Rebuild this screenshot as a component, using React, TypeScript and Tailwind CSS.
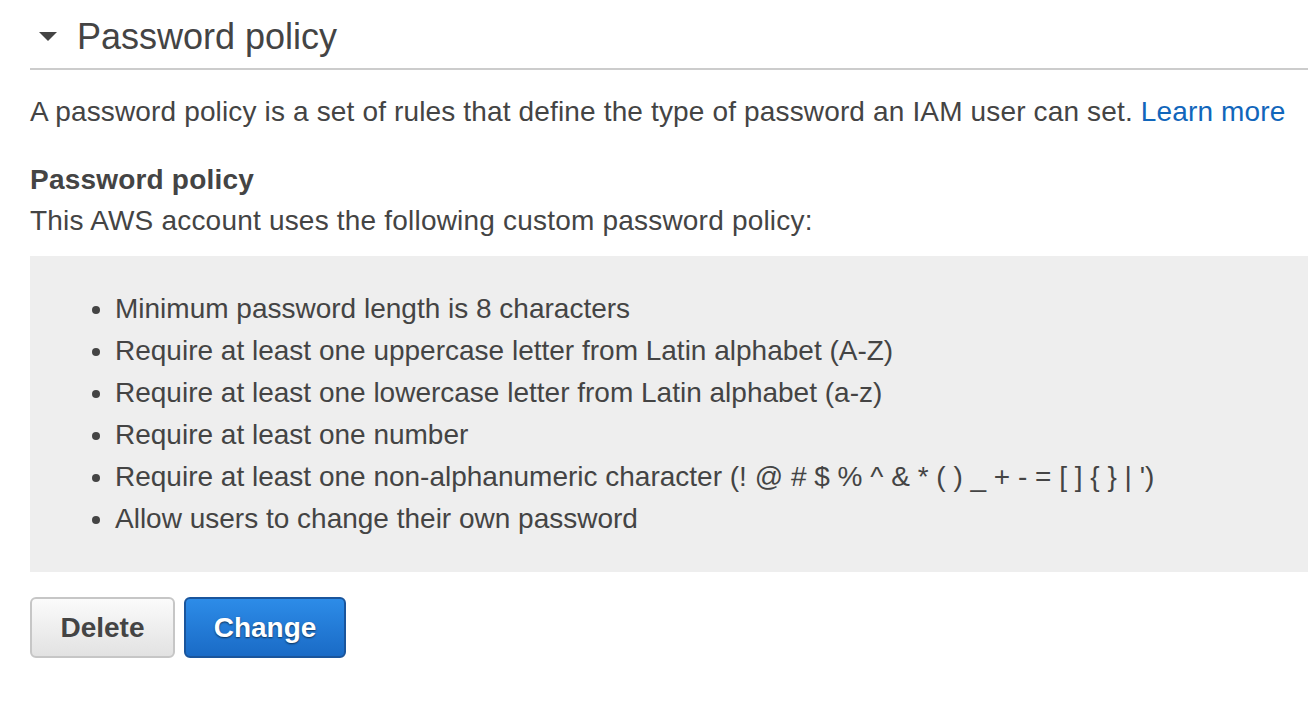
export default function App() {
  const rules = [
    'Minimum password length is 8 characters',
    'Require at least one uppercase letter from Latin alphabet (A-Z)',
    'Require at least one lowercase letter from Latin alphabet (a-z)',
    'Require at least one number',
    "Require at least one non-alphanumeric character (! @ # $ % ^ & * ( ) _ + - = [ ] { } | ')",
    'Allow users to change their own password',
  ]

  return (
    <div className="bg-white min-h-[712px] pl-[30px] text-[#444444] font-['Liberation_Sans',Arial,sans-serif]">
      <div className="h-[70px] flex items-center border-b-2 border-[#cccccc] pt-[6px]">
        <svg width="18" height="10" viewBox="0 0 18 10" className="ml-[9px] mr-[20px]">
          <path d="M0 0 H18 L9 9 Z" fill="#444444" />
        </svg>
        <h1 className="text-[36px] leading-none">Password policy</h1>
      </div>

      <p className="mt-[21px] text-[28px] leading-[42px] tracking-[0.15px]">
        A password policy is a set of rules that define the type of password an IAM user can set.{' '}
        <a className="text-[#1166bb]">Learn more</a>
      </p>

      <div className="mt-[26px] text-[28px] leading-[41px] tracking-[0.2px]">
        <div className="font-bold">Password policy</div>
        <div>This AWS account uses the following custom password policy:</div>
      </div>

      <div className="mt-[15px] bg-[#eeeeee] py-[32px]">
        <ul className="list-disc pl-[85px] text-[28px] leading-[42px]">
          {rules.map((r, i) => (
            <li key={i}>{r}</li>
          ))}
        </ul>
      </div>

      <div className="mt-[25px] flex gap-[9px]">
        <button className="h-[61px] w-[145px] rounded-[6px] border-2 border-[#c6c6c6] bg-gradient-to-b from-[#fbfbfb] to-[#e2e2e2] text-[28px] font-bold text-[#444444]">
          Delete
        </button>
        <button className="h-[61px] w-[162px] rounded-[6px] border-2 border-[#1a559c] bg-gradient-to-b from-[#2d8ce8] to-[#1a6bc6] text-[28px] font-bold text-white [text-shadow:0_1px_2px_rgba(0,0,0,0.6)]">
          Change
        </button>
      </div>
    </div>
  )
}
